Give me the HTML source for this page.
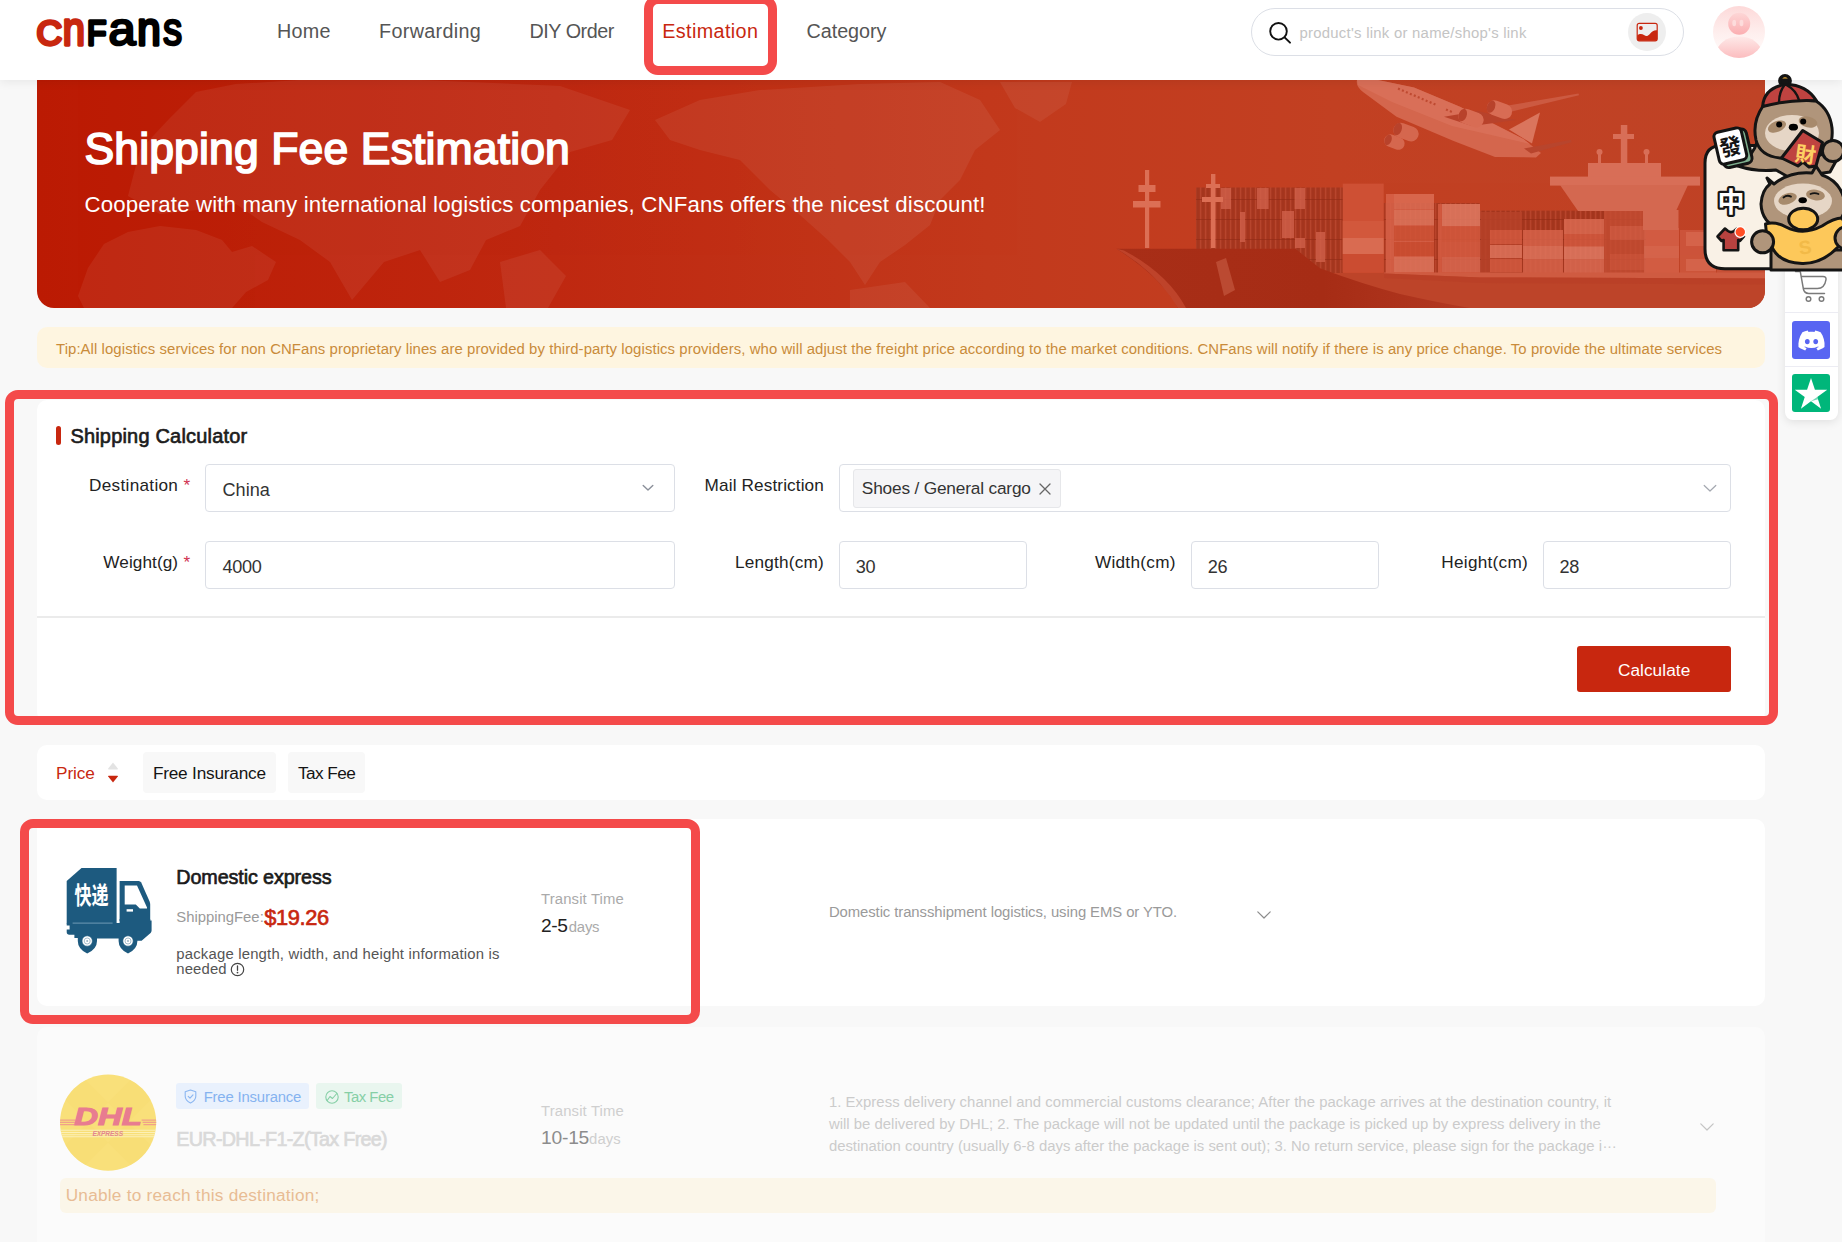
<!DOCTYPE html>
<html lang="en"><head>
<meta charset="utf-8">
<title>CNFans - Shipping Fee Estimation</title>
<style>
*{box-sizing:border-box;margin:0;padding:0}
html,body{width:1842px;height:1242px;overflow:hidden;background:#f8f8f8}
body{font-family:"Liberation Sans","Noto Sans CJK SC",sans-serif;color:#222;position:relative}
.abs{position:absolute}
.t{position:absolute;white-space:pre;line-height:1;font-size:16px}
.b{font-weight:400;-webkit-text-stroke:.65px}
svg{position:absolute;overflow:visible}
svg text{font-family:"Liberation Sans","Noto Sans CJK SC",sans-serif}
/* header */
header{position:absolute;left:0;top:0;width:1842px;height:80px;background:#fff;box-shadow:0 2px 10px rgba(0,0,0,.075);z-index:5}
nav .t{font-size:19.1px;color:#555}
nav .t.on{color:#c8270f}
.hl{position:absolute;border:9px solid #f44a4a;border-radius:13px;z-index:20;pointer-events:none}
.search{position:absolute;left:1251px;top:8px;width:433px;height:48px;border:1px solid #dcdfe6;border-radius:24px;background:#fff}
.imgbtn{position:absolute;left:1628px;top:13px;width:38px;height:38px;border-radius:50%;background:#eee}
/* banner */
.banner{position:absolute;left:37px;top:80px;width:1728px;height:228px;border-radius:0 0 17px 17px;overflow:hidden;background:linear-gradient(90deg,#bb1a03 0%,#bf2810 30%,#c2391c 55%,#c24022 75%,#bf4326 100%)}
.banner .t{color:#fff}
/* tip */
.tip{position:absolute;left:37px;top:327px;width:1728px;height:42px;border-radius:8px;background:#fef5e0}
/* cards */
.card{position:absolute;left:37px;width:1728px;background:#fff;border-radius:10px}
.inp{position:absolute;height:48px;border:1px solid #dcdfe6;border-radius:4px;background:#fff}
.lab{font-size:16.6px;color:#222}
.req{font-size:16.6px;color:#d03050}
.val{font-size:17.5px;color:#333}
.chip{position:absolute;top:752px;height:41px;border-radius:4px;background:#f8f8f8}
</style>
</head>
<body>

<header>
  <svg style="left:0;top:0" width="200" height="80" viewBox="0 0 200 80" role="img" aria-label="CNFans">
    <text stroke-linejoin="round" stroke-linecap="round" stroke-width="3.3"><tspan x="36.6" y="44.9" font-size="35.6" fill="#c8270f" stroke="#c8270f" textLength="25.6" lengthAdjust="spacingAndGlyphs">C</tspan><tspan x="62.8" y="44.9" font-size="46.5" fill="#c8270f" stroke="#c8270f" textLength="22.2" lengthAdjust="spacingAndGlyphs">n</tspan><tspan x="87" y="44.9" font-size="35.6" fill="#000" stroke="#000" textLength="19.4" lengthAdjust="spacingAndGlyphs">F</tspan><tspan x="108.4" y="44.9" font-size="47" fill="#000" stroke="#000" stroke-width="2.5" textLength="27.2" lengthAdjust="spacingAndGlyphs">a</tspan><tspan x="137.2" y="44.9" font-size="46.5" fill="#000" stroke="#000" textLength="23.4" lengthAdjust="spacingAndGlyphs">n</tspan><tspan x="163" y="44.9" font-size="47" fill="#000" stroke="#000" stroke-width="2.5" textLength="19.2" lengthAdjust="spacingAndGlyphs">s</tspan></text>
  </svg>
  <nav>
    <span class="t" style="font-size: 19.77px; letter-spacing: 0.25px; top: 21.8px; left: 277px;">Home</span>
    <span class="t" style="font-size: 19.77px; letter-spacing: 0.333px; top: 21.8px; left: 379px;">Forwarding</span>
    <span class="t" style="font-size: 19.77px; letter-spacing: -0.474px; top: 21.8px; left: 529.5px;">DIY Order</span>
    <span class="t on" style="font-size: 19.77px; letter-spacing: 0.375px; top: 21.8px; left: 662.3px;">Estimation</span>
    <span class="t" style="font-size: 19.77px; letter-spacing: -0.039px; top: 21.8px; left: 806.5px;">Category</span>
  </nav>
  <div class="search">
    <svg style="left:15.2px;top:11px" width="26" height="26" viewBox="0 0 26 26"><circle cx="11.5" cy="11.3" r="8.3" fill="none" stroke="#111" stroke-width="1.9"></circle><path d="M17.6 17.4 L23 22.6" stroke="#111" stroke-width="2" stroke-linecap="round"></path></svg>
  </div>
  <span class="t" style="font-size: 14.9px; color: rgb(196, 196, 196); letter-spacing: 0.256px; top: 26.3px; left: 1299.5px;">product's link or name/shop's link</span>
  <div class="imgbtn"><svg style="left:8px;top:9px" width="22" height="20" viewBox="0 0 22 20"><rect x="1.2" y="1.4" width="20" height="17.4" rx="2" fill="#eee" stroke="#c8270f" stroke-width="1.2"></rect><path d="M1.2 13.4 C3.5 11.4 6 11.6 8 13 C10 14.4 11.6 14.4 13.6 12.2 C16 9.4 18.6 7.8 21.2 8.4 V16.8 Q21.2 18.8 19.2 18.8 H3.2 Q1.2 18.8 1.2 16.8 Z" fill="#c8270f"></path><circle cx="4.9" cy="6" r="1.9" fill="#c8270f"></circle></svg></div>
  <svg style="left:1712.7px;top:6px" width="52" height="52" viewBox="0 0 52 52">
    <defs>
      <linearGradient id="avbg" x1="0" y1="0" x2="0" y2="1"><stop offset="0" stop-color="#fdd9d9"></stop><stop offset=".45" stop-color="#feeceb"></stop><stop offset=".75" stop-color="#fff6f5"></stop><stop offset="1" stop-color="#fff"></stop></linearGradient>
      <linearGradient id="avhd" x1="0" y1="0" x2="0" y2="1"><stop offset="0" stop-color="#fdd6d6"></stop><stop offset="1" stop-color="#fbaeb1"></stop></linearGradient>
      <linearGradient id="avsh" x1="0" y1="0" x2="0" y2="1"><stop offset="0" stop-color="#fee9e8"></stop><stop offset=".75" stop-color="#fbb3b6"></stop></linearGradient>
      <clipPath id="avc"><circle cx="26" cy="26" r="26"></circle></clipPath>
    </defs>
    <circle cx="26" cy="26" r="26" fill="url(#avbg)"></circle>
    <g clip-path="url(#avc)"><ellipse cx="26.2" cy="48" rx="23" ry="17.5" fill="url(#avsh)"></ellipse></g>
    <circle cx="26.2" cy="17.8" r="11" fill="url(#avhd)"></circle>
    <ellipse cx="21.2" cy="17" rx="1.9" ry="3.2" fill="#fddcdc"></ellipse><ellipse cx="28.5" cy="17" rx="1.9" ry="3.2" fill="#fddcdc"></ellipse>
  </svg>
</header>
<div class="hl" style="left:644.2px;top:-4.6px;width:132.6px;height:79.4px;border-radius:14px"></div>

<main>
<section class="banner">
  <svg style="left:0;top:0" width="1728" height="228" viewBox="37 80 1728 228">
  <!-- faint world map -->
  <g fill="#fff" opacity=".06">
    <path d="M78 296 L88 268 L104 244 L128 232 L160 226 L196 230 L222 240 L232 252 L252 246 L276 262 L268 280 L246 292 L232 308 L84 308 Z"></path>
    <path d="M128 196 L140 150 L170 118 L196 92 L236 84 L300 80 L420 80 L560 86 L630 110 L612 140 L570 152 L540 190 L520 226 L486 240 L470 270 L440 282 L420 250 L384 262 L352 300 L330 262 L300 240 L262 222 L236 204 L196 210 L160 214 Z"></path>
    <path d="M500 262 L540 250 L566 276 L548 308 L506 308 Z"></path>
    <path d="M655 120 L700 100 L760 90 L860 84 L940 82 L980 100 L1000 130 L975 150 L960 180 L940 200 L930 225 L905 245 L880 262 L865 285 L850 262 L828 240 L800 215 L770 190 L740 160 L700 150 L670 140 Z"></path>
    <path d="M1000 82 L1072 82 L1066 104 L1040 122 L1015 108 Z"></path>
    <path d="M850 290 L905 282 L930 308 L850 308 Z"></path>
  </g>
  <!-- plane -->
  <path d="M1357 80 H1378 L1414 87.4 L1460 106.8 L1523.5 139 L1541 153 L1536 157.4 L1495 157 L1453 140.7 L1396.5 116.7 L1363 92 Q1355.5 86 1357 80 Z" fill="#d4664d"></path>
  <path d="M1357 80 H1378 L1414 87.4 L1460 106.8 L1523.5 139 L1530 144 L1452 126 L1392 102 L1358 85 Z" fill="#dc745c" opacity=".7"></path>
  <path d="M1398 88.6 L1437.4 105.4 M1446 109.4 L1452 112" fill="none" stroke="#bf4a31" stroke-width="2.2" stroke-dasharray="2 2.3"></path>
  <path d="M1444 116.7 L1478 111 L1516 120 L1472 126 Z" fill="#b8422b"></path>
  <path d="M1490 108.6 L1578.5 93.4 L1579 95.2 L1508 112.4 Z" fill="#cc5a41"></path>
  <path d="M1509 129.4 L1540 112.5 L1532 143.6 Z" fill="#da755d"></path>
  <path d="M1524 148.4 L1571 139.8 L1571.6 142.2 L1531 153.4 Z" fill="#b8452d"></path>
  <g transform="rotate(20 1499.5 109.6)"><rect x="1486.5" y="102.2" width="26" height="15" rx="7.5" fill="#d86c54"></rect><ellipse cx="1490.6" cy="109.7" rx="4" ry="6.4" fill="#b8422b"></ellipse></g>
  <g transform="rotate(20 1471 118)"><rect x="1458" y="110.6" width="26" height="15" rx="7.5" fill="#d86c54"></rect><ellipse cx="1462.2" cy="118.1" rx="4" ry="6.4" fill="#b8422b"></ellipse></g>
  <g transform="rotate(20 1406 132)"><rect x="1393" y="124.6" width="26" height="15" rx="7.5" fill="#d5674e"></rect><ellipse cx="1397.2" cy="132.1" rx="4" ry="6.4" fill="#b8422b"></ellipse></g>
  <g transform="rotate(20 1395 142)"><rect x="1384" y="136" width="21" height="12.6" rx="6.3" fill="#d5674e"></rect><ellipse cx="1387.8" cy="142.3" rx="3.4" ry="5.4" fill="#b8422b"></ellipse></g>
  <!-- ship: dark container block -->
  <defs><pattern id="ctx" width="5" height="20" patternUnits="userSpaceOnUse"><rect width="5" height="20" fill="#a9381f"></rect><rect x="0" width="1.2" height="20" fill="#c25038" opacity=".55"></rect><rect x="2.6" width=".8" height="20" fill="#8f2a16" opacity=".5"></rect><rect y="19" width="5" height="1" fill="#8f2a16" opacity=".6"></rect></pattern></defs>
  <rect x="1196" y="187.5" width="147" height="86" fill="url(#ctx)"></rect>
  <g fill="#d0614a" opacity=".8">
    <rect x="1221" y="188" width="10" height="21"></rect><rect x="1257" y="188" width="11.6" height="21"></rect><rect x="1294.6" y="188" width="10.4" height="21"></rect>
    <rect x="1282" y="211" width="12" height="27"></rect><rect x="1240" y="212" width="5" height="30"></rect><rect x="1295" y="238" width="10" height="10"></rect><rect x="1316" y="232" width="9" height="30"></rect>
  </g>
  <!-- lighter stacks -->
  <rect x="1478" y="210.6" width="168" height="64" fill="url(#ctx)"></rect>
  <rect x="1383.6" y="203" width="96" height="70" fill="url(#ctx)" opacity=".85"></rect>
  <g opacity=".84">
    <rect x="1342.7" y="183.6" width="41" height="89" fill="#d15439"></rect>
    <rect x="1342.7" y="221" width="41" height="17" fill="#d65d42"></rect><rect x="1342.7" y="238" width="41" height="16" fill="#de745b"></rect><rect x="1342.7" y="254" width="41" height="18.6" fill="#cd4f34"></rect>
    <rect x="1386" y="194" width="48" height="79" fill="#d9634a"></rect>
    <rect x="1394" y="194" width="40" height="15" fill="#dd6e55"></rect><rect x="1394" y="210" width="40" height="15" fill="#df765e"></rect><rect x="1394" y="226" width="40" height="15" fill="#d15539"></rect><rect x="1394" y="242" width="40" height="14" fill="#cf5034"></rect><rect x="1394" y="257" width="40" height="15" fill="#df765e"></rect>
    <rect x="1438" y="204" width="42" height="69" fill="#d65c42"></rect>
    <rect x="1442" y="204" width="38" height="22" fill="#e17b64"></rect><rect x="1442" y="227" width="38" height="15" fill="#d45a3f"></rect><rect x="1442" y="257" width="38" height="15" fill="#d96850"></rect>
    <rect x="1481" y="212" width="41" height="61" fill="#b74229"></rect>
    <rect x="1490" y="230" width="32" height="14" fill="#d35a40"></rect><rect x="1490" y="245" width="32" height="13" fill="#de745c"></rect><rect x="1490" y="259" width="32" height="13" fill="#d35a40"></rect>
    <rect x="1523" y="230" width="40" height="43" fill="#d7634a"></rect><rect x="1523" y="246" width="40" height="13" fill="#de745c"></rect>
    <rect x="1564" y="219" width="40" height="54" fill="#da6a52"></rect><rect x="1564" y="234" width="40" height="12" fill="#d35a40"></rect><rect x="1564" y="247" width="40" height="12" fill="#e07a63"></rect>
    <rect x="1604" y="210" width="40" height="63" fill="#c44d33"></rect><rect x="1610" y="226" width="34" height="14" fill="#d15c43"></rect><rect x="1610" y="254" width="34" height="16" fill="#cd553b"></rect>
    <rect x="1644" y="228" width="35" height="45" fill="#d66148"></rect><rect x="1644" y="246" width="35" height="12" fill="#d96a52"></rect>
    <rect x="1680" y="230" width="36" height="43" fill="#cf583e"></rect><rect x="1686" y="232" width="30" height="14" fill="#d96a52"></rect><rect x="1686" y="259" width="30" height="12" fill="#d96a52"></rect>
    <rect x="1717" y="240" width="48" height="33" fill="#c9533a"></rect><rect x="1722" y="256" width="43" height="14" fill="#d66148"></rect>
  </g>
  <!-- bridge -->
  <g fill="#d86e57">
    <rect x="1620.8" y="125" width="6.5" height="40"></rect><rect x="1613" y="134" width="21" height="5"></rect>
    <rect x="1588" y="163" width="73" height="14"></rect>
    <rect x="1550" y="176.6" width="150" height="9"></rect>
    <path d="M1560 185 H1688 L1676 211 H1578 Z" fill="#d46850"></path>
    <rect x="1643" y="210" width="35.5" height="20" fill="#d46850"></rect>
    <rect x="1598" y="153" width="3" height="12"></rect><rect x="1645" y="153" width="3" height="12"></rect><circle cx="1599.5" cy="152" r="3"></circle><circle cx="1646.5" cy="152" r="3"></circle>
  </g>
  <!-- masts -->
  <g fill="#dc6f55">
    <rect x="1145" y="170" width="4.2" height="78"></rect><rect x="1138.5" y="185" width="17" height="7"></rect><rect x="1133" y="201" width="27.5" height="6.5"></rect>
    <rect x="1211" y="174" width="4.4" height="74"></rect><rect x="1202" y="197" width="21" height="5"></rect><rect x="1206" y="184" width="14" height="4"></rect>
  </g>
  <!-- hull -->
  <defs><linearGradient id="hullg" gradientUnits="userSpaceOnUse" x1="1117" y1="0" x2="1460" y2="0"><stop offset="0" stop-color="#a82e17"></stop><stop offset=".6" stop-color="#a62c15"></stop><stop offset="1" stop-color="#b23821"></stop></linearGradient></defs>
  <rect x="1318" y="273" width="447" height="35" fill="#bd4429"></rect>
  <path d="M1384 272.4 H1765 V278.6 L1480 277.4 L1384 273.4 Z" fill="#cf5b41"></path>
  <path d="M1384 273.4 L1480 277.4 L1765 278.6 V284.6 L1480 283 L1384 278 Z" fill="#b94027" opacity=".8"></path>
  <path d="M1116.3 248.8 H1295.4 L1320 268.3 Q1362 284 1400 294 Q1440 303 1470 308 H1178 Q1160 276 1116.3 248.8 Z" fill="url(#hullg)"></path>
  <path d="M1116.3 248.8 Q1150 268 1170 296 L1178 308 H1186 Q1168 274 1124 250.4 Z" fill="#c4492f" opacity=".8"></path>
  <path d="M1216 262 L1226 258 L1235 290 L1224 296 Z" fill="#c2543c" opacity=".75"></path>
</svg>

  <h1 class="t" style="font-size: 44.5px; font-weight: 400; -webkit-text-stroke: 1.7px rgb(255, 255, 255); letter-spacing: 0.134px; top: 47px; left: 47.5px;">Shipping Fee Estimation</h1>
  <p class="t" style="font-size: 22.25px; letter-spacing: 0.139px; top: 113.6px; left: 47.5px;">Cooperate with many international logistics companies, CNFans offers the nicest discount!</p>
</section>

<section class="tip" style="top:327px;height:41px;border-radius:10px">
  <p class="t" style="font-size: 14.9px; color: rgb(201, 139, 58); letter-spacing: 0.083px; top: 14.7px; left: 19px;">Tip:All logistics services for non CNFans proprietary lines are provided by third-party logistics providers, who will adjust the freight price according to the market conditions. CNFans will notify if there is any price change. To provide the ultimate services</p>
</section>

<section class="card" style="top:400px;height:322px">
  <div class="abs" style="left:19px;top:26px;width:5px;height:19px;border-radius:2.5px;background:#c8270f"></div>
  <h2 class="t b" style="font-size: 19.98px; color: rgb(28, 28, 28); letter-spacing: 0.203px; top: 26.2px; left: 33.4px;">Shipping Calculator</h2>

  <label class="t lab" style="font-size: 17.18px; letter-spacing: 0.293px; top: 76.7px; left: 52.06px;">Destination</label>
  <span class="t req" style="font-size: 17.18px; letter-spacing: 1.078px; top: 76.7px; left: 146.5px;">*</span>
  <div class="inp" style="left:168px;top:64px;width:470px"></div>
  <span class="t val" style="font-size: 18.11px; letter-spacing: 0.013px; top: 81.2px; left: 185.5px;">China</span>
  <svg style="left:605px;top:84px" width="12" height="8" viewBox="0 0 12 8"><path d="M1.2 1.5 L6 6 L10.8 1.5" fill="none" stroke="#8a8f99" stroke-width="1.4" stroke-linecap="round" stroke-linejoin="round"></path></svg>

  <label class="t lab" style="font-size: 17.18px; letter-spacing: 0.127px; top: 76.7px; left: 667.59px;">Mail Restriction</label>
  <div class="inp" style="left:802px;top:64px;width:891.7px"></div>
  <div class="abs" style="left:815.5px;top:68.5px;width:208.5px;height:39px;border:1px solid #e6e7ea;border-radius:3px;background:#f5f5f7"></div>
  <span class="t" style="font-size: 17.28px; color: rgb(51, 51, 51); letter-spacing: -0.182px; top: 79.8px; left: 824.8px;">Shoes / General cargo</span>
  <svg style="left:1001.5px;top:82.5px" width="12" height="12" viewBox="0 0 12 12"><path d="M1 1 L11 11 M11 1 L1 11" stroke="#666" stroke-width="1.3" stroke-linecap="round"></path></svg>
  <svg style="left:1666px;top:84px" width="14" height="9" viewBox="0 0 14 9"><path d="M1.2 1.5 L7 7 L12.8 1.5" fill="none" stroke="#a4a8b0" stroke-width="1.2" stroke-linecap="round" stroke-linejoin="round"></path></svg>

  <label class="t lab" style="font-size: 17.18px; letter-spacing: 0.09px; top: 154px; left: 66.26px;">Weight(g)</label>
  <span class="t req" style="font-size: 17.18px; letter-spacing: 1.078px; top: 154px; left: 146.5px;">*</span>
  <div class="inp" style="left:168px;top:141px;width:470px"></div>
  <span class="t val" style="font-size: 18.11px; letter-spacing: -0.309px; top: 158px; left: 185.5px;">4000</span>

  <label class="t lab" style="font-size: 17.18px; letter-spacing: 0.208px; top: 154.3px; left: 698.06px;">Length(cm)</label>
  <div class="inp" style="left:802px;top:141px;width:188px"></div>
  <span class="t val" style="font-size: 18.11px; letter-spacing: -0.313px; top: 158px; left: 818.7px;">30</span>

  <label class="t lab" style="font-size: 17.18px; letter-spacing: 0.293px; top: 154.3px; left: 1057.92px;">Width(cm)</label>
  <div class="inp" style="left:1154px;top:141px;width:188px"></div>
  <span class="t val" style="font-size: 18.11px; letter-spacing: -0.313px; top: 158px; left: 1170.8px;">26</span>

  <label class="t lab" style="font-size: 17.18px; letter-spacing: 0.269px; top: 154.3px; left: 1404.34px;">Height(cm)</label>
  <div class="inp" style="left:1506px;top:141px;width:188px"></div>
  <span class="t val" style="font-size: 18.11px; letter-spacing: -0.313px; top: 158px; left: 1522.5px;">28</span>

  <div class="abs" style="left:0;top:216px;width:1728px;height:1.5px;background:#ebebeb"></div>
  <div class="abs" style="left:1540px;top:246px;width:154px;height:46px;border-radius:3px;background:#c8270f"></div>
  <span class="t" style="font-size: 17.23px; color: rgb(255, 255, 255); letter-spacing: 0.066px; top: 262.3px; left: 1580.9px;">Calculate</span>
</section>
<div class="hl" style="left:4.5px;top:390px;width:1773px;height:334.5px"></div>


<section class="card" style="top:745px;height:55px">
  <span class="t" style="font-size: 17.23px; color: rgb(200, 39, 15); letter-spacing: -0.072px; top: 20.4px; left: 19px;">Price</span>
  <svg style="left:69.7px;top:16.5px" width="12" height="22" viewBox="0 0 12 22"><path d="M6 0.6 L10.8 6.6 Q11.3 7.4 10.3 7.4 L1.7 7.4 Q0.7 7.4 1.2 6.6 Z" fill="#e3e3e3"></path><path d="M6 20.6 L10.8 14.6 Q11.3 13.8 10.3 13.8 L1.7 13.8 Q0.7 13.8 1.2 14.6 Z" fill="#c8270f"></path></svg>
  <div class="chip" style="left:106px;top:7px;width:133px"></div>
  <span class="t" style="font-size: 17.23px; color: rgb(20, 20, 20); letter-spacing: -0.2px; top: 20.4px; left: 115.9px;">Free Insurance</span>
  <div class="chip" style="left:251px;top:7px;width:77px"></div>
  <span class="t" style="font-size: 17.23px; color: rgb(20, 20, 20); letter-spacing: -0.551px; top: 20.4px; left: 260.9px;">Tax Fee</span>
</section>


<section class="card" style="top:819px;height:187px">
  <svg style="left:0;top:0" width="160" height="187" viewBox="37 819 160 187">
    <g fill="#1d5a7f">
      <path d="M66.7 881 L81.5 868 H116.6 V923.6 H66.7 Z"></path>
      <path d="M119.6 881 H138.6 Q140.4 881 141.2 882.6 L149.6 901.4 Q150.2 902.8 150.2 904.4 V921 H119.6 Z"></path>
      <path d="M66.7 923 H119.6 V919 H150.2 V920.6 H151.6 V930.6 Q151.6 932 150.6 933 L141.6 940.8 H137.4 V941 Q137.4 949 128 953.6 Q118.6 949 118.6 941 V938.6 H97 V941 Q97 949 87.2 953.6 Q77.8 949 77.8 941 V938 H74.4 V934.8 H69.4 Q66.7 934.8 66.7 932 V929.6 H69.6 V925.4 H66.7 Z"></path>
    </g>
    <path d="M124.7 885.6 H137 L147 907.6 V908.6 H139.8 L135.8 904.6 H124.7 Z" fill="#fff"></path>
    <rect x="126.6" y="909.2" width="6.4" height="2.4" fill="#fff"></rect>
    <rect x="72.6" y="922.6" width="40" height="1" fill="#6f9ab5"></rect>
    <g fill="#fff" stroke="#1d5a7f" stroke-width=".6"><circle cx="87.2" cy="941" r="5.2"></circle><circle cx="128" cy="941" r="5.2"></circle></g>
    <g fill="none" stroke="#9db6c6" stroke-width=".9"><circle cx="87.2" cy="941" r="3"></circle><circle cx="128" cy="941" r="3"></circle></g>
    <g fill="#9db6c6"><circle cx="87.2" cy="941" r="1"></circle><circle cx="128" cy="941" r="1"></circle></g>
    <text x="74.4" y="903.6" font-size="19.5" font-weight="bold" fill="#fff" textLength="34.2" lengthAdjust="spacingAndGlyphs" transform="translate(0 903.6) scale(1 1.22) translate(0 -903.6)" style="font-family:&quot;Liberation Sans&quot;,&quot;Noto Sans CJK SC&quot;,sans-serif">快递</text>
  </svg>

  <h3 class="t b" style="font-size: 19.77px; color: rgb(26, 26, 26); letter-spacing: -0.122px; top: 49.2px; left: 139.3px;">Domestic express</h3>
  <span class="t" style="font-size: 14.86px; color: rgb(154, 154, 154); letter-spacing: -0.01px; top: 91.4px; left: 139.3px;">ShippingFee:</span>
  <span class="t b" style="font-size: 21.84px; color: rgb(200, 39, 15); letter-spacing: -0.378px; top: 87.8px; left: 227.3px;">$19.26</span>
  <span class="t" style="font-size: 14.86px; color: rgb(85, 85, 85); letter-spacing: 0.196px; top: 127.9px; left: 139.3px;">package length, width, and height information is</span>
  <span class="t" style="font-size: 14.86px; color: rgb(85, 85, 85); letter-spacing: 0.141px; top: 143.1px; left: 139.3px;">needed</span>
  <svg style="left:193px;top:143px" width="15" height="15" viewBox="0 0 15 15"><circle cx="7.5" cy="7.5" r="6.2" fill="none" stroke="#444" stroke-width="1.2"></circle><path d="M7.5 4 V8.3" stroke="#444" stroke-width="1.3" stroke-linecap="round"></path><circle cx="7.5" cy="10.6" r="0.9" fill="#444"></circle></svg>
  <span class="t" style="font-size: 14.86px; color: rgb(170, 170, 170); letter-spacing: 0.148px; top: 72.7px; left: 504px;">Transit Time</span>
  <span class="t" style="font-size: 19.15px; color: rgb(34, 34, 34); letter-spacing: -0.344px; top: 96.9px; left: 504px;">2-5</span>
  <span class="t" style="font-size: 14.86px; color: rgb(170, 170, 170); letter-spacing: -0.223px; top: 100.9px; left: 531.8px;">days</span>
  <p class="t" style="font-size: 14.86px; color: rgb(154, 154, 154); letter-spacing: -0.076px; top: 86.3px; left: 791.9px;">Domestic transshipment logistics, using EMS or YTO.</p>
  <svg style="left:1219.5px;top:92px" width="14" height="8" viewBox="0 0 14 8"><path d="M0.8 0.8 L7 7 L13.2 0.8" fill="none" stroke="#8c8c8c" stroke-width="1.2" stroke-linecap="round" stroke-linejoin="round"></path></svg>
</section>
<div class="hl" style="left:19.5px;top:818.5px;width:680.5px;height:205px"></div>


<section class="card" style="top:1026.5px;height:230px;background:#fbfbfb">
  <svg style="left:0;top:0" width="160" height="200" viewBox="37 1026.5 160 200">
    <defs><clipPath id="dhlc"><circle cx="108.1" cy="1122.1" r="48.1"></circle></clipPath></defs>
    <circle cx="108.1" cy="1122.1" r="48.1" fill="#f9e07a"></circle>
    <g clip-path="url(#dhlc)">
      <path d="M60 1074 L80 1074 L156 1150 L156 1170 L136 1170 L60 1094 Z M156 1074 L136 1074 L60 1150 L60 1170 L80 1170 L156 1094 Z" fill="#f7db70" opacity=".45"></path>
      <g stroke="#f0a08a" stroke-width="1.2"><path d="M58 1119.7 H75.5 M58 1121.9 H74.8 M58 1124.1 H74 M141.6 1119.7 H158 M142.6 1121.9 H158 M143.4 1124.1 H158"></path></g>
      <g stroke="#fcf0b6" stroke-width="1.1"><path d="M58 1129.8 H158 M58 1132 H158 M58 1134.2 H158 M58 1136.3 H158"></path></g>
    </g>
    <text x="74.2" y="1124.5" font-size="23.4" font-weight="bold" font-style="italic" fill="#e87c90" stroke="#e87c90" stroke-width="1.1" stroke-linejoin="miter" textLength="67.6" lengthAdjust="spacingAndGlyphs">DHL</text>
    <text x="92.4" y="1135.5" font-size="7.2" font-style="italic" font-weight="bold" fill="#e2848f" textLength="30.6" lengthAdjust="spacingAndGlyphs">EXPRESS</text>
  </svg>

  <div class="abs" style="left:139px;top:56.5px;width:133px;height:26px;border-radius:3px;background:#e9f1fd"></div>
  <svg style="left:147px;top:62.5px" width="13" height="15" viewBox="0 0 13 15"><path d="M6.5 1 L11.8 2.8 V7.2 Q11.8 11.4 6.5 14 Q1.2 11.4 1.2 7.2 V2.8 Z" fill="none" stroke="#8ab6f1" stroke-width="1.1" stroke-linejoin="round"></path><path d="M4.2 7.4 L6 9.2 L9 5.8" fill="none" stroke="#8ab6f1" stroke-width="1.1" stroke-linecap="round" stroke-linejoin="round"></path></svg>
  <span class="t" style="font-size: 14.86px; color: rgb(133, 179, 240); letter-spacing: -0.174px; top: 63.5px; left: 166.7px;">Free Insurance</span>
  <div class="abs" style="left:279px;top:56.5px;width:86px;height:26px;border-radius:3px;background:#e9f6ef"></div>
  <svg style="left:288px;top:63px" width="14" height="14" viewBox="0 0 14 14"><circle cx="7" cy="7" r="6.2" fill="none" stroke="#86cfa6" stroke-width="1.1"></circle><path d="M2.2 10.5 L5 6.5 L7.5 8.5 L11.8 3.5" fill="none" stroke="#86cfa6" stroke-width="1.1" stroke-linejoin="round" stroke-linecap="round"></path></svg>
  <span class="t" style="font-size: 14.86px; color: rgb(134, 207, 166); letter-spacing: -0.478px; top: 63.5px; left: 307px;">Tax Fee</span>
  <h3 class="t b" style="font-size: 19.77px; color: rgb(217, 217, 217); letter-spacing: -0.707px; top: 103.8px; left: 139.3px;">EUR-DHL-F1-Z(Tax Free)</h3>
  <span class="t" style="font-size: 14.86px; color: rgb(207, 207, 207); letter-spacing: 0.148px; top: 77.3px; left: 504px;">Transit Time</span>
  <span class="t" style="font-size: 19.25px; color: rgb(140, 140, 140); letter-spacing: -0.228px; top: 101.8px; left: 504px;">10-15</span>
  <span class="t" style="font-size: 14.86px; color: rgb(207, 207, 207); letter-spacing: 0.077px; top: 105.8px; left: 552.1px;">days</span>
  <p class="t" style="font-size: 14.86px; color: rgb(203, 203, 203); letter-spacing: 0.053px; top: 68.1px; left: 791.9px;">1. Express delivery channel and commercial customs clearance; After the package arrives at the destination country, it</p>
  <p class="t" style="font-size: 14.86px; color: rgb(203, 203, 203); letter-spacing: 0.027px; top: 90.2px; left: 791.9px;">will be delivered by DHL; 2. The package will not be updated until the package is picked up by express delivery in the</p>
  <p class="t" style="font-size: 14.86px; color: rgb(203, 203, 203); letter-spacing: 0.007px; top: 112.2px; left: 791.9px;">destination country (usually 6-8 days after the package is sent out); 3. No return service, please sign for the package i</p>
  <span class="t" style="font-size: 14.86px; color: rgb(203, 203, 203); letter-spacing: -0.42px; top: 112.4px; left: 1565.6px;">···</span>
  <svg style="left:1663px;top:96.5px" width="14" height="8" viewBox="0 0 14 8"><path d="M0.8 0.8 L7 7 L13.2 0.8" fill="none" stroke="#c4c4c4" stroke-width="1.2" stroke-linecap="round" stroke-linejoin="round"></path></svg>
  <div class="abs" style="left:23px;top:151px;width:1655.5px;height:35px;border-radius:6px;background:#fbf6e9"></div>
  <span class="t" style="font-size: 17.23px; color: rgb(232, 188, 148); letter-spacing: 0.239px; top: 160.1px; left: 28.7px;">Unable to reach this destination;</span>
</section>

</main>

<aside class="abs" style="left:1785px;top:262px;width:53px;height:158px;background:#fff;border-radius:8px;box-shadow:0 2px 10px rgba(0,0,0,.10);z-index:25">
  <svg style="left:8px;top:8px" width="36" height="36" viewBox="1793 270 36 36"><g fill="none" stroke="#7a7a7a" stroke-width="1.45" stroke-linecap="round" stroke-linejoin="round"><path d="M1795.5 271.6 H1800.3 L1803.4 289 Q1804.2 293.4 1808.8 293.4 H1824.5"></path><path d="M1801.6 276.4 H1823 Q1826.4 276.4 1826 279.6 Q1824.6 288.5 1817.4 288.5 H1803.6"></path><circle cx="1808.5" cy="299" r="2.3"></circle><circle cx="1821.5" cy="299" r="2.3"></circle></g></svg>
  <div class="abs" style="left:0;top:50px;width:53px;height:1px;background:#ececf3"></div>
  <div class="abs" style="left:7px;top:59px;width:38px;height:38px;border-radius:3px;background:#5865f2"></div>
  <svg style="left:13px;top:68px" width="27" height="21" viewBox="0 0 27 21"><path d="M22.6 2.2 C20.9 1.4 19.1 0.8 17.2 0.5 L16.5 1.9 C14.5 1.6 12.5 1.6 10.5 1.9 L9.8 0.5 C7.9 0.8 6.1 1.4 4.4 2.2 C1 7.3 0.1 12.200000000000001 0.5 17.1 C2.8 18.8 5 19.8 7.2 20.5 L8.6 18.2 C7.8 17.9 7 17.5 6.300000000000001 17.1 L6.9 16.6 C11.1 18.6 15.8 18.6 20.1 16.6 L20.700000000000003 17.1 C20 17.5 19.200000000000003 17.9 18.400000000000002 18.2 L19.8 20.5 C22 19.8 24.2 18.8 26.5 17.1 C27 11.4 25.6 6.5 22.6 2.2 Z" fill="#fff"></path><ellipse cx="9.3" cy="11.6" rx="2.35" ry="2.6" fill="#5865f2"></ellipse><ellipse cx="17.7" cy="11.6" rx="2.35" ry="2.6" fill="#5865f2"></ellipse></svg>
  <div class="abs" style="left:0;top:104px;width:53px;height:1px;background:#ececf3"></div>
  <div class="abs" style="left:7px;top:112px;width:38px;height:38px;border-radius:3px;background:#00b67a"></div>
  <svg style="left:9.3px;top:115px" width="34" height="33" viewBox="0 0 32 31"><path d="M16 0.8 L19.7 11.9 H31.3 L21.9 18.7 L25.5 29.8 L16 22.9 L6.5 29.8 L10.1 18.7 L0.7 11.9 H12.3 Z" fill="#fff"></path><path d="M22.6 21 L21.9 18.7 L16 22.9 Z" fill="#00b67a" opacity=".55"></path></svg>
</aside>


<svg class="mascot" style="left:1692px;top:60px;z-index:30" width="150" height="220" viewBox="1692 60 150 220">
  <g stroke="#141414" stroke-width="3" stroke-linejoin="round" stroke-linecap="round">
    <!-- speech bubble -->
    <path d="M1850 145.5 H1722 Q1705 145.5 1705 163 V249 Q1705 268.8 1725 268.8 H1850 Z" fill="#f9f1e6"></path>
    <!-- upper sloth arm to tile + body -->
    <path d="M1758 140 Q1752 158 1738 166 Q1756 172 1776 170 L1790 178 L1830 172 L1842 150 Z" fill="#b0957b"></path>
    <!-- upper head -->
    <path d="M1763 106 Q1752 122 1756 140 Q1760 156 1780 158 Q1800 160 1818 156 Q1834 150 1832 128 Q1830 110 1816 101 Q1790 98 1763 106 Z" fill="#b0957b"></path>
    <!-- hat -->
    <circle cx="1785" cy="80.8" r="5.4" fill="#141414"></circle>
    <path d="M1762.6 106.5 Q1764 88 1785 84.5 Q1806 84 1816.5 100.8 Q1790 99 1762.6 106.5 Z" fill="#bf4340"></path>
    <path d="M1779 102.5 Q1779 92 1784.5 85 M1799 100.2 Q1796 90 1786.5 85" fill="none" stroke-width="2.4"></path>
  </g>
  <path d="M1782.2 78.6 Q1785 75.8 1787.8 78.6 Z" fill="#f4b63c"></path>
  <!-- upper face -->
  <ellipse cx="1792" cy="133" rx="27" ry="18" fill="#e6d6c6"></ellipse>
  <ellipse cx="1777" cy="126.6" rx="9.5" ry="5.4" transform="rotate(-22 1777 126.6)" fill="#a78a6c"></ellipse>
  <ellipse cx="1808" cy="122" rx="9.5" ry="5.4" transform="rotate(12 1808 122)" fill="#a78a6c"></ellipse>
  <circle cx="1779.2" cy="124.4" r="3" fill="#000"></circle><circle cx="1803.2" cy="121.4" r="3" fill="#000"></circle>
  <ellipse cx="1793.4" cy="127.2" rx="4.6" ry="3.4" fill="#000"></ellipse>
  <!-- tile -->
  <g transform="rotate(-13 1731.5 146.5)">
    <rect x="1720" y="131.5" width="29" height="35" rx="5" fill="#7fb08f" stroke="#141414" stroke-width="3"></rect>
    <rect x="1716.5" y="129.5" width="28" height="32.5" rx="4.5" fill="#fff" stroke="#141414" stroke-width="3"></rect>
    <text x="1730.5" y="154.5" font-size="22" font-weight="bold" text-anchor="middle" fill="#141414" style="font-family:&quot;Liberation Sans&quot;,&quot;Noto Sans CJK TC&quot;,&quot;Noto Sans CJK SC&quot;,sans-serif">發</text>
  </g>
  <!-- lower sloth -->
  <g stroke="#141414" stroke-width="3" stroke-linejoin="round" stroke-linecap="round">
    <path d="M1771 270 V250 L1850 250 V270 Z" fill="#b0957b"></path>
    <path d="M1767 178 L1774 184 Q1790 171 1812 173 L1816 166 L1822 175 Q1842 182 1845 204 Q1845 232 1804 234 Q1762 232 1761 204 Q1762 190 1770 184 Z" fill="#b0957b"></path>
  </g>
  <ellipse cx="1803" cy="201" rx="29" ry="17.5" fill="#e6d6c6"></ellipse>
  <ellipse cx="1787.6" cy="198.8" rx="9.5" ry="5.4" transform="rotate(-20 1787.6 198.8)" fill="#a78a6c"></ellipse>
  <ellipse cx="1815.5" cy="195" rx="9.5" ry="5.4" transform="rotate(8 1815.5 195)" fill="#a78a6c"></ellipse>
  <path d="M1783.5 197.5 Q1787 194.6 1791 196.6 M1810.5 194 Q1814.5 192.4 1818.5 194" fill="none" stroke="#141414" stroke-width="1.8" stroke-linecap="round"></path>
  <ellipse cx="1802.7" cy="200.2" rx="4.2" ry="3" fill="#000"></ellipse>
  <g stroke="#141414" stroke-width="3" stroke-linejoin="round">
    <!-- ingot -->
    <path d="M1765.5 224 Q1775 221 1786 227 Q1803 236 1822 226 Q1834 218 1842 218 Q1850 232 1838 247 Q1822 264 1802 263.4 Q1781 262.6 1773.6 250 Q1766 238 1765.5 224 Z" fill="#fdc85a"></path>
    <ellipse cx="1803.2" cy="219" rx="14.5" ry="10.8" fill="#fdc85a"></ellipse>
    <circle cx="1762.6" cy="241.8" r="11" fill="#b0957b"></circle>
    <circle cx="1846" cy="238" r="11" fill="#b0957b"></circle>
  </g>
  <text x="1805" y="254" font-size="19" font-weight="bold" text-anchor="middle" fill="#f2ba48" transform="rotate(-8 1805 247)">S</text>
  <!-- envelope -->
  <g stroke="#141414" stroke-width="3" stroke-linejoin="round">
    <circle cx="1833" cy="151" r="10.6" fill="#b0957b"></circle>
    <path d="M1802.7 130.5 L1822.5 142.5 L1816 166 L1809 167 L1803 162 L1798 166 L1781.5 158 Z" fill="#bf4340"></path>
  </g>
  <text x="1805.5" y="162" font-size="21" font-weight="bold" text-anchor="middle" fill="#fdd063" transform="rotate(8 1805.5 154.5)" style="font-family:&quot;Liberation Sans&quot;,&quot;Noto Sans CJK TC&quot;,&quot;Noto Sans CJK SC&quot;,sans-serif">財</text>
  <!-- 中 -->
  <text x="1731" y="212" font-size="27" font-weight="700" text-anchor="middle" fill="#fff" stroke="#141414" stroke-width="4.6" stroke-linejoin="round" paint-order="stroke" style="font-family:&quot;Liberation Sans&quot;,&quot;Noto Sans CJK SC&quot;,sans-serif">中</text>
  <!-- t-shirt -->
  <path d="M1717.5 236.5 L1725 228.5 L1728 231 Q1731 233.2 1734 231 L1737 228.5 L1744 236.5 L1740 241 L1738.2 240 V250.3 H1723.6 V240 L1721.6 241 Z" fill="#b8423f" stroke="#141414" stroke-width="2.6" stroke-linejoin="round"></path>
  <circle cx="1740.3" cy="232" r="5.3" fill="#ff4d24" stroke="#fff" stroke-width="1.2"></circle>
</svg>




</body></html>
